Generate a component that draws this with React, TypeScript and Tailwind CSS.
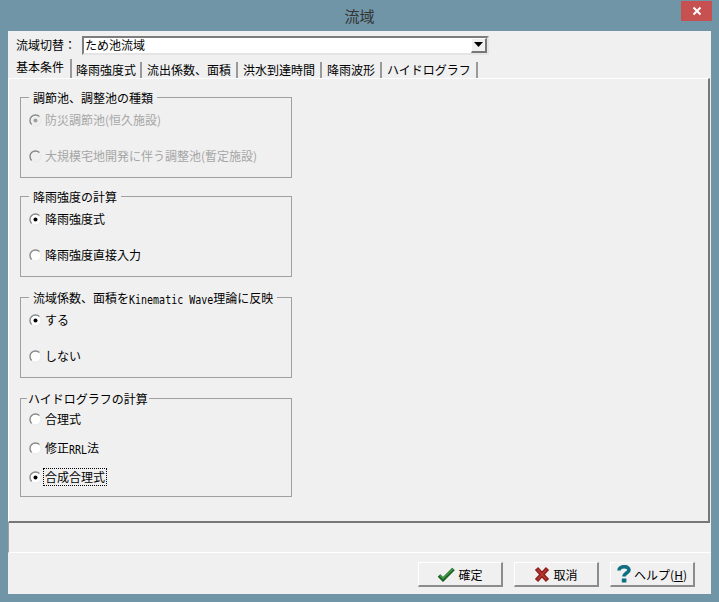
const font = { fontFamily: "'Noto Sans CJK JP', 'Liberation Sans', sans-serif" };

const tabs = [
  { label: "基本条件", w: "w-[62px]", active: true },
  { label: "降雨強度式", w: "w-[70px]" },
  { label: "流出係数、面積", w: "w-[96px]" },
  { label: "洪水到達時間", w: "w-[84px]" },
  { label: "降雨波形", w: "w-[60px]" },
  { label: "ハイドログラフ", w: "w-[96px]" },
];

function Latin({ children }: { children: string }) {
  return <span className="inline-block scale-y-125 font-['DejaVu_Sans_Mono'] text-[10px] leading-[12px] whitespace-pre">{children}</span>;
}

function Radio({ checked, disabled, focus, children, className }: {
  checked?: boolean;
  disabled?: boolean;
  focus?: boolean;
  children: React.ReactNode;
  className?: string;
}) {
  return (
    <div className={`flex items-center h-[18px] ${className ?? ""}`}>
      <svg width="13" height="13" viewBox="0 0 13 13" className="shrink-0">
        <circle cx="6.5" cy="6.5" r="5.5" fill={disabled ? "#f0f0f0" : "#ffffff"} stroke="#e8e8e8" />
        <path d="M2.6 10.4A5.5 5.5 0 0 1 10.4 2.6" fill="none" stroke="#8a8a8a" strokeWidth="1.4" />
        {checked && <circle cx="6.5" cy="6.5" r="2" fill={disabled ? "#a0a0a0" : "#000000"} />}
      </svg>
      <span
        className={`ml-px text-xs leading-[16px] px-px border border-dotted ${
          focus ? "border-black" : "border-transparent"
        } ${disabled ? "text-[#a6a6a6]" : "text-black"}`}
      >
        {children}
      </span>
    </div>
  );
}

function Group({ title, h, className, titleClass, children }: {
  title: React.ReactNode;
  h: string;
  className?: string;
  titleClass?: string;
  children: React.ReactNode;
}) {
  return (
    <div className={`relative w-[272px] border border-[#a0a0a0] pl-2 ${h} ${className ?? ""}`}>
      <div className={`absolute -top-[8px] bg-[#f0f0f0] text-xs leading-[16px] text-black whitespace-nowrap ${titleClass ?? "left-[8px] px-[4px]"}`}>
        {title}
      </div>
      {children}
    </div>
  );
}

function DlgButton({ icon, label }: { icon: React.ReactNode; label: React.ReactNode }) {
  return (
    <button
      type="button"
      className="w-[85px] h-[25px] bg-[#f0f0f0] border-t border-l border-t-white border-l-white border-b-2 border-r-2 border-b-[#8c8c8c] border-r-[#8c8c8c] flex items-center justify-center text-xs text-black"
    >
      {icon}
      <span className="ml-[3px] pt-px">{label}</span>
    </button>
  );
}

export default function App() {
  return (
    <div className="relative w-[719px] h-[602px] bg-[#6f95a6] px-2 pb-2 flex flex-col overflow-hidden" style={font}>
      <div className="h-[31px] shrink-0 flex items-center justify-center pt-px text-[15px] text-[#333333]">流域</div>
      <div className="absolute top-px right-[7px] w-[31px] h-[20px] bg-[#c75050] flex items-center justify-center">
        <svg width="10" height="10" viewBox="0 0 10 10">
          <path d="M1.5 1.5L8.5 8.5M8.5 1.5L1.5 8.5" stroke="#ffffff" strokeWidth="2" />
        </svg>
      </div>

      <div className="flex-1 bg-[#f0f0f0] flex flex-col min-h-0">
        <div className="flex items-center h-[18px] mt-[5px] pl-2 shrink-0">
          <span className="text-xs w-[66px]">流域切替：</span>
          <div className="w-[407px] h-[19px] bg-white border-2 border-t-[#7d7d7d] border-l-[#7d7d7d] border-b-[#e4e4e4] border-r-[#e4e4e4] flex items-center">
            <span className="flex-1 text-xs pl-px">ため池流域</span>
            <div className="w-[16px] h-[15px] bg-[#f0f0f0] border-b-2 border-r-2 border-b-[#777777] border-r-[#777777] border-t border-l border-t-white border-l-white flex items-center justify-center">
              <svg width="9" height="5" viewBox="0 0 9 5"><path d="M0 0H9L4.5 5Z" fill="#000000" /></svg>
            </div>
          </div>
        </div>

        <div className="flex items-end h-[19px] mt-[5px] pl-[2px] shrink-0">
          {tabs.map((t) => (
            <div
              key={t.label}
              className={`${t.w} border-r-2 border-r-[#9a9a9a] text-xs flex justify-center ${
                t.active ? "h-[19px] leading-[15px]" : "h-[16px] leading-[16px]"
              }`}
            >
              {t.label}
            </div>
          ))}
        </div>

        <div className="h-[445px] shrink-0 border-t border-l border-t-white border-l-white border-b-2 border-r-2 border-b-[#777777] border-r-[#777777] pl-[11px] pt-[18px] mr-px">
          <Group title="調節池、調整池の種類" h="h-[81px]">
            <Radio disabled checked className="mt-[13px]">防災調節池(恒久施設)</Radio>
            <Radio disabled className="mt-[18px]">大規模宅地開発に伴う調整池(暫定施設)</Radio>
          </Group>
          <Group title="降雨強度の計算" h="h-[81px]" className="mt-[18px]">
            <Radio checked className="mt-[13px]">降雨強度式</Radio>
            <Radio className="mt-[18px]">降雨強度直接入力</Radio>
          </Group>
          <Group
            title={<>流域係数、面積を<Latin>Kinematic Wave</Latin>理論に反映</>}
            h="h-[81px]"
            className="mt-[20px]"
          >
            <Radio checked className="mt-[13px]">する</Radio>
            <Radio className="mt-[18px]">しない</Radio>
          </Group>
          <Group title="ハイドログラフの計算" h="h-[99px]" className="mt-[20px]" titleClass="left-[6px] px-px">
            <Radio className="mt-[11px]">合理式</Radio>
            <Radio className="mt-[11px]">修正<Latin>RRL</Latin>法</Radio>
            <Radio checked focus className="mt-[11px]">合成合理式</Radio>
          </Group>
        </div>

        <div className="h-[30px] shrink-0 border-l border-l-[#a0a0a0] border-b border-b-white" />

        <div className="flex-1 flex justify-end items-start gap-[11px] pt-[9px] pr-4">
          <DlgButton
            label="確定"
            icon={
              <svg width="18" height="15" viewBox="0 0 18 15">
                <path d="M2 8.5L6 12.5L16.5 2" fill="none" stroke="#1b5e20" strokeWidth="3.6" />
                <path d="M3 8.5L6 11.5L16 2" fill="none" stroke="#3f9d46" strokeWidth="1.4" />
              </svg>
            }
          />
          <DlgButton
            label="取消"
            icon={
              <svg width="16" height="15" viewBox="0 0 16 15">
                <path d="M2.5 1.5L13.5 13.5M13.5 1.5L2.5 13.5" fill="none" stroke="#8f1f1c" strokeWidth="4.4" />
                <path d="M3.5 2.5L12.5 12.5M12.5 2.5L3.5 12.5" fill="none" stroke="#b8382f" strokeWidth="1.6" />
              </svg>
            }
          />
          <DlgButton
            label={<>ヘルプ(<span className="underline">H</span>)</>}
            icon={
              <svg width="14" height="18" viewBox="0 0 14 18">
                <path d="M2 5.5C2 0.5 12 0.5 12 5C12 8 7 8 7 11.5" fill="none" stroke="#0f6f80" strokeWidth="3.6" />
                <rect x="4.8" y="13.5" width="4.6" height="4" fill="#0f6f80" />
              </svg>
            }
          />
        </div>
      </div>
    </div>
  );
}
